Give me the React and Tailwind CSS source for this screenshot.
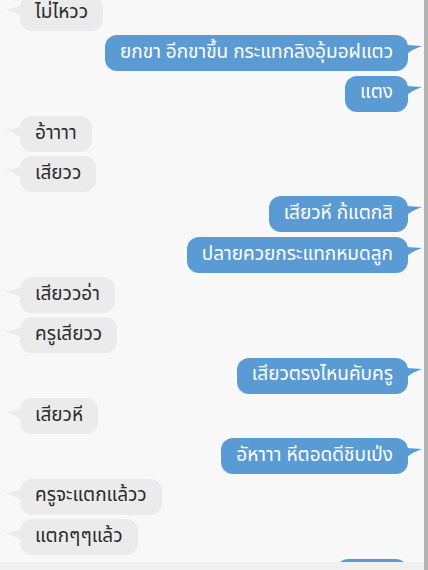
const messages = [
  { side: "left", text: "ไม่ไหวว" },
  { side: "right", text: "ยกขา อีกขาขึ้น กระแทกลิงอุ้มอฝแตว" },
  { side: "right", text: "แตง" },
  { side: "left", text: "อ้าาาา" },
  { side: "left", text: "เสียวว" },
  { side: "right", text: "เสียวหี ก้แตกสิ" },
  { side: "right", text: "ปลายควยกระแทกหมดลูก" },
  { side: "left", text: "เสียววอ่า" },
  { side: "left", text: "ครูเสียวว" },
  { side: "right", text: "เสียวตรงไหนคับครู" },
  { side: "left", text: "เสียวหี" },
  { side: "right", text: "อัหาาา หีตอดดีชิบเป่ง" },
  { side: "left", text: "ครูจะแตกแล้วว" },
  { side: "left", text: "แตกๆๆแล้ว" },
  { side: "right", text: "อ้าาาา" },
];

function Bubble({ side, text }) {
  if (side === "left") {
    return (
      <div className="relative self-start h-[36px] shrink-0 flex items-center px-[15px] rounded-[12px] bg-[#ebebeb] text-[#2b2b2b]">
        <svg
          className="absolute left-[-15px] top-[10px]"
          width="16"
          height="12"
          viewBox="0 0 16 12"
        >
          <path d="M16 0 Q8 4 0 4 Q8 6 16 11 Z" fill="#ebebeb" />
        </svg>
        {text}
      </div>
    );
  }

  return (
    <div className="relative self-end h-[36px] shrink-0 flex items-center px-[15px] rounded-[12px] bg-[#5b9bd3] text-white">
      <svg
        className="absolute right-[-14px] top-[10px]"
        width="15"
        height="10"
        viewBox="0 0 15 10"
      >
        <path d="M0 0 L15 1 Q6 4 0 9 Z" fill="#5b9bd3" />
      </svg>
      {text}
    </div>
  );
}

export default function App() {
  return (
    <div className="w-[428px] h-[570px] flex bg-[#f8f8f8] overflow-hidden font-['Noto_Sans_Thai','Noto_Sans',sans-serif] text-[19px]">
      <div className="flex-1 flex flex-col">
        <div className="flex-1 overflow-hidden">
          <div className="flex flex-col gap-[4.3px] -mt-[5px] pl-[20px] pr-[16px]">
            {messages.map((m, i) => (
              <Bubble key={i} side={m.side} text={m.text} />
            ))}
          </div>
        </div>
        <div className="h-[8px] bg-[#f0f0f0]" />
      </div>
      <div className="w-[4px] bg-[#b3b3b3]" />
    </div>
  );
}
